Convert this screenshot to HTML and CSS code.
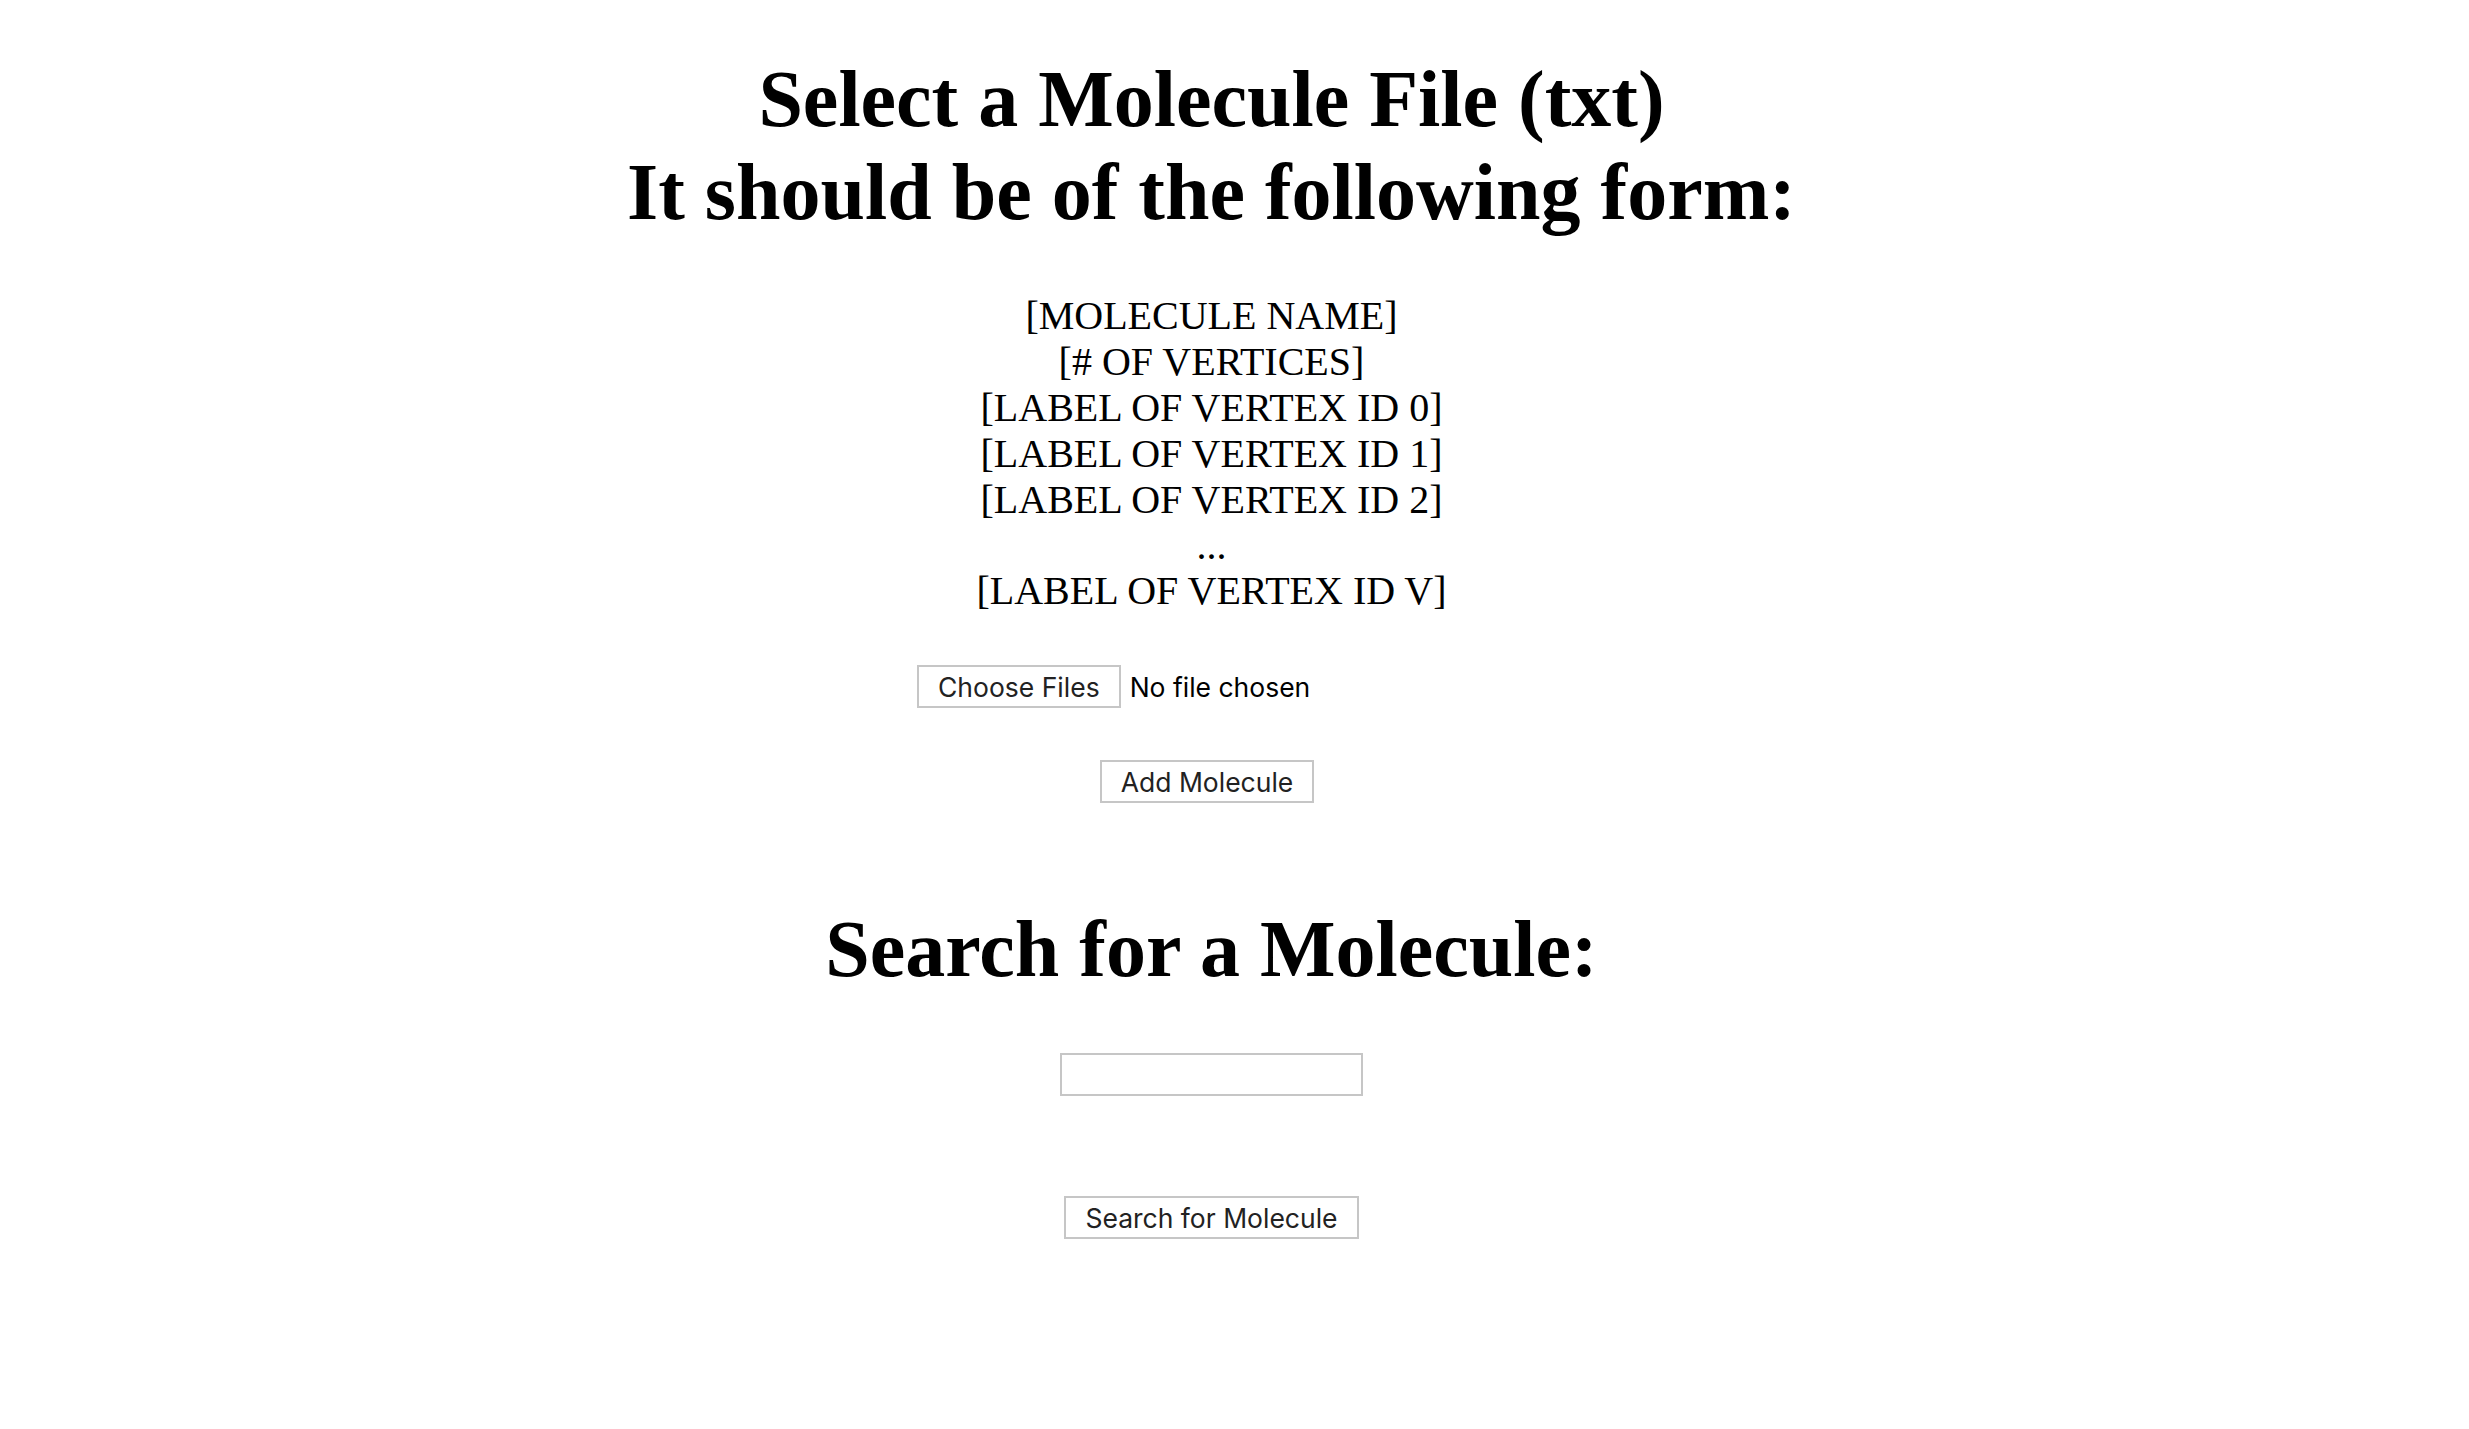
FILE: index.html
```html
<!DOCTYPE html>
<html lang="en">
<head>
<meta charset="utf-8">
<title>Molecules</title>
<link rel="stylesheet" href="styles.css">
</head>
<body>
<main class="page">
  <h1 class="title">Select a Molecule File (txt)<br>It should be of the following form:</h1>
  <div class="format">
    [MOLECULE NAME]<br>
    [# OF VERTICES]<br>
    [LABEL OF VERTEX ID 0]<br>
    [LABEL OF VERTEX ID 1]<br>
    [LABEL OF VERTEX ID 2]<br>
    ...<br>
    [LABEL OF VERTEX ID V]
  </div>
  <form class="upload">
    <div class="file-row">
      <span class="file-picker">
        <button type="button" class="btn">Choose Files</button>
        <span class="file-label">No file chosen</span>
      </span>
    </div>
    <div class="add-row">
      <button type="button" class="btn">Add Molecule</button><span class="trail"></span>
    </div>
  </form>
  <h1 class="title search-title">Search for a Molecule:</h1>
  <form class="search">
    <div class="input-row"><input type="text" class="text-input"></div>
    <div class="search-row"><button type="button" class="btn">Search for Molecule</button></div>
  </form>
</main>
</body>
</html>
```
FILE: styles.css
```css
html, body {
  margin: 0;
  padding: 0;
  background: #ffffff;
}
.page {
  width: 2423px;
  padding-top: 1px;
  text-align: center;
  font-family: "Liberation Serif", "Times New Roman", serif;
  color: #000;
}
.title {
  font-family: "Liberation Serif", "Times New Roman", serif;
  font-weight: bold;
  font-size: 80px;
  line-height: 93px;
  margin: 52px 0 54px;
}
.format {
  font-size: 40px;
  line-height: 45.9px;
}
.upload {
  margin: 0;
}
.file-row {
  margin-top: 51px;
  display: flex;
  justify-content: center;
}
.file-picker {
  display: flex;
  align-items: center;
  width: 589px;
  gap: 9px;
}
.btn {
  font-family: "Inter", "Liberation Sans", sans-serif;
  font-size: 26.5px;
  color: #222;
  background: #fff;
  border: 2px solid #c6c6c6;
  border-radius: 0;
  height: 43px;
  padding: 0 19px;
  margin: 0;
  line-height: 1;
}
.file-label {
  font-family: "Inter", "Liberation Sans", sans-serif;
  font-size: 26.5px;
  color: #000;
}
.add-row {
  margin-top: 52px;
  display: flex;
  justify-content: center;
}
.trail {
  display: inline-block;
  width: 9px;
}
.search-title {
  margin-top: 100px;
  margin-bottom: 57px;
}
.search {
  margin: 0;
}
.input-row {
  display: flex;
  justify-content: center;
}
.text-input {
  width: 303px;
  height: 43px;
  box-sizing: border-box;
  border: 2px solid #c6c6c6;
  margin: 0;
  padding: 0 6px;
  font-size: 26px;
}
.search-row {
  margin-top: 100px;
  display: flex;
  justify-content: center;
}
```
